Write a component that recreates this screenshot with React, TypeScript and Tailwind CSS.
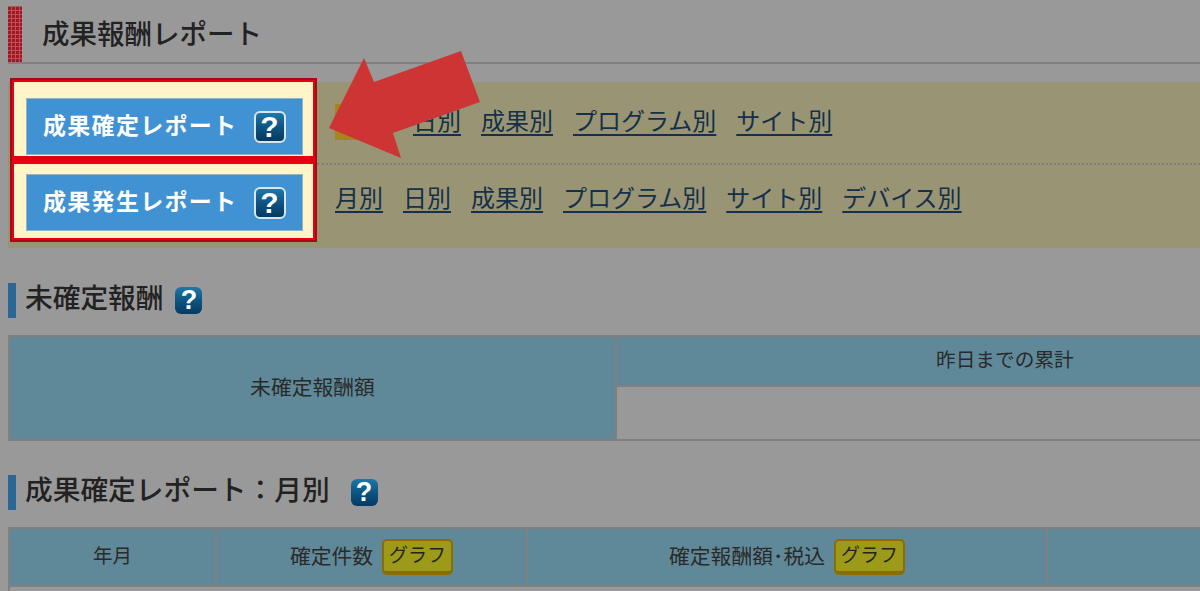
/**
 * Performance report page, dimmed behind a tutorial highlight.
 */
import React from 'react';

const FONT = "font-['Liberation_Sans','Noto_Sans_CJK_JP',sans-serif]";

function HelpIcon({ className }: { className?: string }) {
  return (
    <span
      className={`flex items-center justify-center rounded-[6px] bg-gradient-to-b from-[#1f78a8] via-[#0d5482] to-[#063a60] font-['Liberation_Sans',sans-serif] font-bold leading-none text-white ${className ?? ''}`}
    >
      ?
    </span>
  );
}

function GraphBadge() {
  return (
    <span className="ml-[9px] flex h-[36px] w-[71px] items-center justify-center rounded-[5px] border-2 border-b-[4px] border-[#8a6d06] bg-[#9c9a18] text-[19px] text-[#26241a]">
      グラフ
    </span>
  );
}

function ReportButton({ label }: { label: string }) {
  return (
    <div className="flex h-[57px] w-[277px] items-center border border-[#8fb4c8] bg-[#4092d2] pl-[16px] text-[23px] font-bold tracking-[1.3px] text-white">
      <span className="w-[211px] whitespace-nowrap">{label}</span>
      <HelpIcon className="h-[32px] w-[32px] border-2 border-[#d8e6ee] text-[30px]" />
    </div>
  );
}

function SectionHeading({ label, gap }: { label: string; gap: string }) {
  return (
    <div className="ml-[8px] flex h-[35px] items-center">
      <span className="h-full w-[8px] bg-[#2b6795]" />
      <h2 className="ml-[9px] -mt-[3px] whitespace-nowrap text-[27.7px] font-medium leading-none text-[#222222]">
        {label}
      </h2>
      <HelpIcon className={`${gap} h-[27px] w-[27px] text-[27px]`} />
    </div>
  );
}

function ReportLinks({ items, current }: { items: string[]; current?: string }) {
  return (
    <div className="flex items-center text-[24px] text-[#14304a]">
      {items.map((item) =>
        item === current ? (
          <span key={item} className="mr-[20px] flex h-[36px] w-[58px] items-center justify-center bg-[#a5851c]">
            {item}
          </span>
        ) : (
          <a key={item} className="mr-[20px] whitespace-nowrap underline underline-offset-[4px]">
            {item}
          </a>
        ),
      )}
    </div>
  );
}

export default function App() {
  return (
    <div lang="ja" className={`relative h-[591px] w-[1200px] overflow-hidden bg-[#999999] ${FONT}`}>
      <header className="ml-[8px] flex h-[64px] items-center border-b-2 border-[#808080] pt-[6px]">
        <span className="h-[56px] w-[14px] bg-[#a01822] bg-[image:repeating-linear-gradient(0deg,transparent,transparent_3px,#b9505a_3px,#b9505a_4px),repeating-linear-gradient(90deg,transparent,transparent_3px,#b9505a_3px,#b9505a_4px)]" />
        <h1 className="ml-[20px] mt-[2px] text-[27.5px] font-medium leading-none text-[#222222]">成果報酬レポート</h1>
      </header>

      <section className="ml-[8px] mt-[18px] flex h-[166px] w-[1192px] bg-[#999474]">
        <div className="z-10 -mt-[4px] ml-[2px] flex h-[164px] w-[307px] shrink-0 flex-col border-2 border-[#a80a12] bg-[#fff5c8] px-[14px] shadow-[inset_0_0_0_2px_#e60012]">
          <div className="h-[76px] pt-[18px]">
            <ReportButton label="成果確定レポート" />
          </div>
          <div className="-mx-[14px] h-[8px] shrink-0 bg-[#e60012]" />
          <div className="pt-[10px]">
            <ReportButton label="成果発生レポート" />
          </div>
        </div>
        <div className="flex-1">
          <div className="flex h-[83px] items-center border-b-2 border-dotted border-[#807e78] pb-[2px] pl-[18px]">
            <ReportLinks items={['月別', '日別', '成果別', 'プログラム別', 'サイト別']} current="月別" />
          </div>
          <div className="flex h-[67px] items-center pl-[18px]">
            <ReportLinks items={['月別', '日別', '成果別', 'プログラム別', 'サイト別', 'デバイス別']} />
          </div>
        </div>
      </section>

      <div className="mt-[35px]">
        <SectionHeading label="未確定報酬" gap="ml-[12px]" />
      </div>

      <div className="ml-[8px] mt-[17px] grid h-[106px] w-[1300px] grid-cols-[607px_1fr] grid-rows-[50px_1fr] border-2 border-[#808080] text-[20.8px] text-[#2a2a2a]">
        <div className="row-span-2 flex items-center justify-center border-r-2 border-[#808080] bg-[#5f8899]">未確定報酬額</div>
        <div className="flex items-center border-b-2 border-[#808080] bg-[#5f8899] pl-[319px] text-[19.7px]">昨日までの累計</div>
        <div />
      </div>

      <div className="mt-[34px]">
        <SectionHeading label="成果確定レポート：月別" gap="ml-[21px]" />
      </div>

      <div className="ml-[8px] mt-[17px] grid h-[80px] w-[1300px] grid-cols-[207px_311px_520px_1fr] grid-rows-[58px_1fr] border-2 border-[#808080] text-[20.8px] text-[#2a2a2a]">
        <div className="flex items-center justify-center border-b-2 border-r-2 border-[#808080] bg-[#5f8899] text-[19.5px]">年月</div>
        <div className="flex items-center justify-center border-b-2 border-r-2 border-[#808080] bg-[#5f8899]">
          確定件数
          <GraphBadge />
        </div>
        <div className="flex items-center justify-center border-b-2 border-r-2 border-[#808080] bg-[#5f8899]">
          確定報酬額･税込
          <GraphBadge />
        </div>
        <div className="border-b-2 border-[#808080] bg-[#5f8899]" />
      </div>

      {/* tutorial arrow */}
      <svg className="absolute left-[325px] top-[48px] z-20" width="160" height="114" viewBox="325 48 160 114">
        <polygon points="329,128 364,58 374,82 461,51 480,102 393,133 401,158" fill="#cc3533" />
      </svg>
    </div>
  );
}
